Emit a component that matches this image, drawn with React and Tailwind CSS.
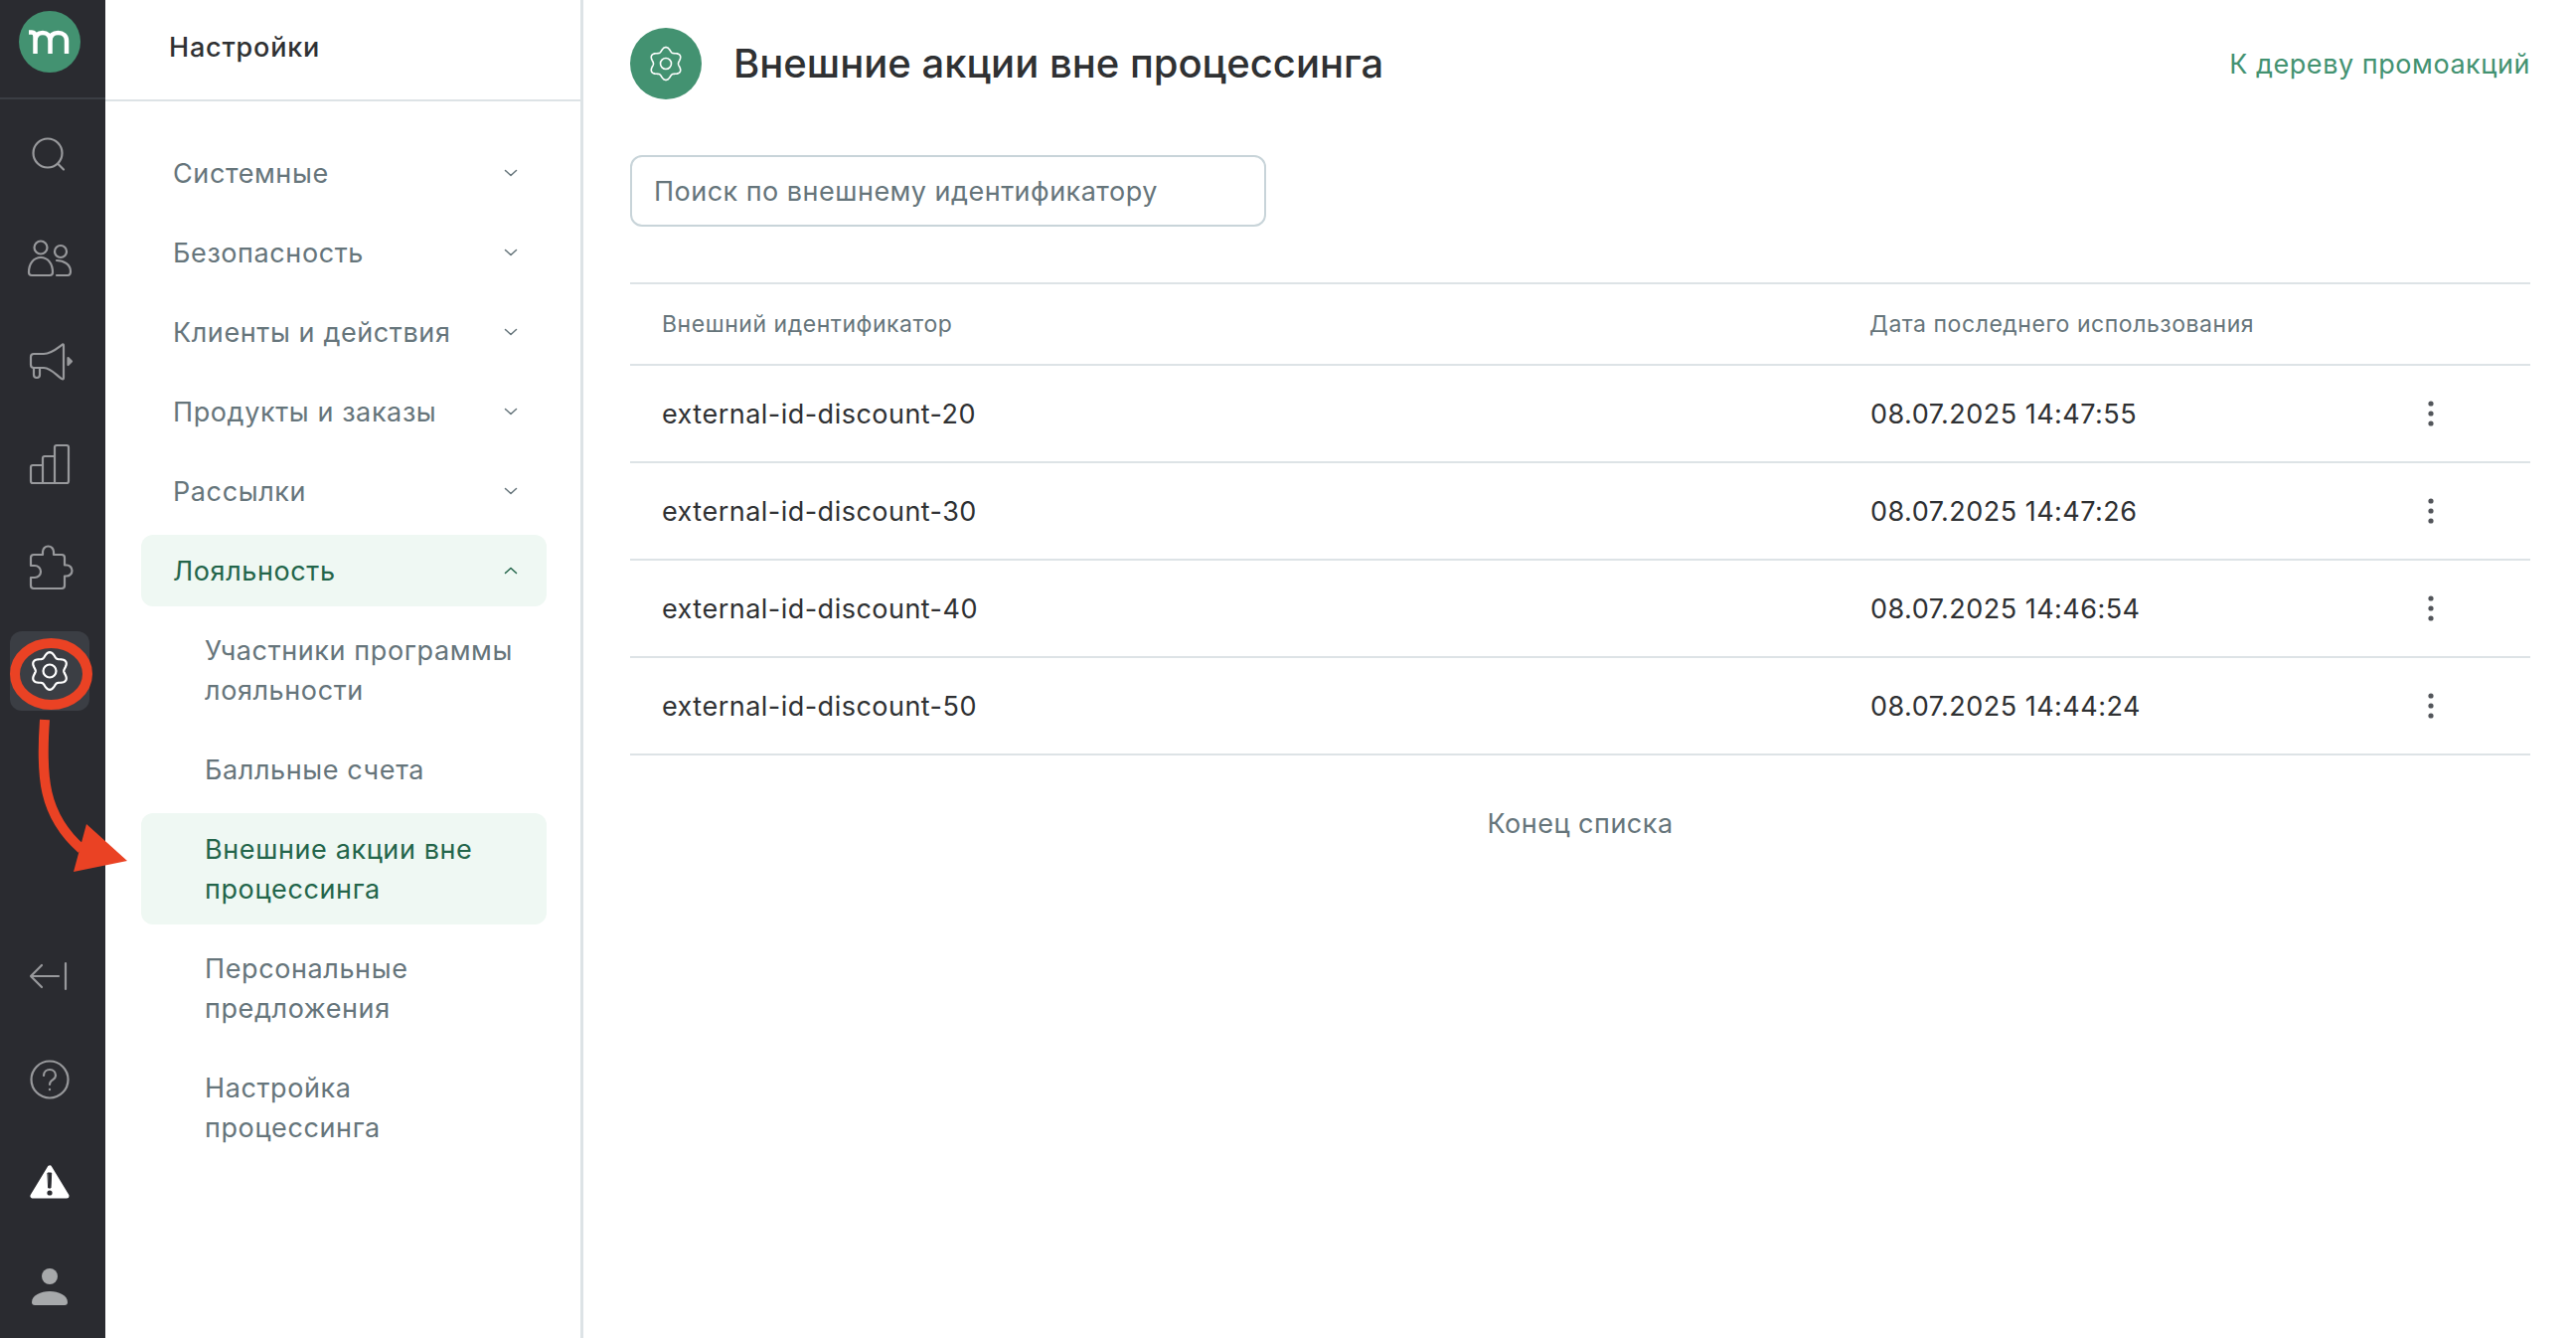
import React from 'react';

const FONT = 'font-[Inter,"Noto_Sans",sans-serif]';

// wavy six-lobed gear outline, same shape in the rail and in the page header
const gearPath = (cx, cy, r, wave) => {
    const pts = [];
    for (let i = 0; i < 120; i++) {
        const t = (i / 120) * Math.PI * 2;
        const rad = r + wave * Math.cos(6 * t);
        pts.push(`${(cx + rad * Math.sin(t)).toFixed(2)} ${(cy - rad * Math.cos(t)).toFixed(2)}`);
    }
    return `M${pts.join('L')}Z`;
};

const RailIcon = ({ children, active }) => (
    <div className="h-[104px] flex items-center justify-center">
        <div className={`w-[80px] h-[80px] rounded-xl flex items-center justify-center ${active ? 'bg-[#3b3e44]' : ''}`}>
            <svg width="52" height="52" viewBox="0 0 52 52" fill="none" stroke="#98999c" strokeWidth="2.2" strokeLinecap="round" strokeLinejoin="round">
                {children}
            </svg>
        </div>
    </div>
);

const Chevron = ({ up }) => (
    <svg width="16" height="16" viewBox="0 0 16 16" fill="none" stroke="currentColor" strokeWidth="1.5" strokeLinecap="round" strokeLinejoin="round">
        <path d={up ? 'M2.5 10.5 8 5.5l5.5 5' : 'M2.5 5.5 8 10.5l5.5-5'} />
    </svg>
);

const Rail = () => (
    <aside className="w-[106px] shrink-0 bg-[#2a2b30] flex flex-col">
        <div className="h-[100px] shrink-0 border-b-2 border-[#3b3e44] flex items-center justify-center pb-[14px] pr-[6px]">
            <svg width="62" height="62" viewBox="0 0 62 62" fill="none">
                <circle cx="31" cy="31" r="31" fill="#439271" />
                <path d="M10 21.5h3c2.5 0 3.5 1.5 3.5 4.5V43M16.5 30c0-6 3.5-8 7.5-8 4.5 0 7.5 3 7.5 8v13M31.5 30c0-6 3.5-8 8-8 5 0 8.5 3 8.5 8v13" stroke="#fff" strokeWidth="4.5" />
            </svg>
        </div>
        <div className="pt-[3px] pr-[6px]">
            <RailIcon>
                <circle cx="24" cy="25" r="14.5" />
                <path d="M34.5 36 40 41.5" />
            </RailIcon>
            <RailIcon>
                <circle cx="17" cy="16" r="6.5" />
                <path d="M8 44h18q3 0 3-3c0-9-5-15-12-15S5 32 5 41q0 3 3 3Z" />
                <circle cx="37" cy="20" r="6" />
                <path d="M33 29c7 0 14 4 14 11q0 4-3 4H33" />
            </RailIcon>
            <RailIcon>
                <path d="M10 19h10c8 0 14-6 19-9.5q1-.5 1 1.5v32q0 2-2 1c-5-3-10-10.5-18-11H10q-3 0-3-3v-8q0-3 3-3Z" />
                <path d="M10 33v7q0 3 3 3t3-3v-6" />
                <path d="M44.5 23 48 26.5 44.5 30Z" fill="#98999c" />
            </RailIcon>
            <RailIcon>
                <path d="M19 27H9q-2 0-2 2v14q0 2 2 2h34q2 0 2-2V9q0-2-2-2H33q-2 0-2 2v9H21q-2 0-2 2v25M31 18v27" />
            </RailIcon>
            <RailIcon>
                <path d="M10 13h9v-3a5.5 5.5 0 0 1 11 0v3h8q3 0 3 3v7.5h2a5.5 5.5 0 0 1 0 11h-2V44q0 3-3 3H10q-3 0-3-3v-8h4a6 6 0 0 0 0-12H7v-8q0-3 3-3Z" />
            </RailIcon>
            <RailIcon active>
                <path d={gearPath(26, 26, 16.5, 2.3)} stroke="#fff" />
                <circle cx="26" cy="26" r="6.5" stroke="#fff" />
            </RailIcon>
        </div>
        <div className="mt-auto pr-[6px]">
            <RailIcon>
                <path d="M7 26h28M18 15 7 26l11 11M42 13v26" />
            </RailIcon>
            <RailIcon>
                <circle cx="26" cy="26" r="18.5" />
                <path d="M20 22c0-4 3-6 6-6 4 0 6 3 6 6s-3 4-4.5 5.5c-1 1-1.5 2-1.5 3.5" />
                <circle cx="26" cy="36" r="1.2" fill="#98999c" stroke="none" />
            </RailIcon>
            <RailIcon>
                <path d="M26 11 9 39h34Z" fill="#fff" stroke="#fff" strokeWidth="5" />
                <path d="M24.3 16h3.4L27 31h-2Z" fill="#2a2b30" stroke="#2a2b30" strokeWidth="1" />
                <circle cx="26" cy="36" r="2.6" fill="#2a2b30" stroke="none" />
            </RailIcon>
            <RailIcon>
                <circle cx="26" cy="16" r="8" fill="#a7a9ab" stroke="none" />
                <path d="M8 42c0-7 9-11 18-11s18 4 18 11q0 3-3 3H11q-3 0-3-3Z" fill="#a7a9ab" stroke="none" />
            </RailIcon>
        </div>
    </aside>
);

const topItems = ['Системные', 'Безопасность', 'Клиенты и действия', 'Продукты и заказы', 'Рассылки'];
const subItems = [
    { label: 'Участники программы лояльности', h: 'h-[112px]' },
    { label: 'Балльные счета', h: 'h-[72px]' },
    { label: 'Внешние акции вне процессинга', h: 'h-[112px]', active: true },
    { label: 'Персональные предложения', h: 'h-[112px]' },
    { label: 'Настройка процессинга', h: 'h-[112px]' },
];

const SettingsNav = () => (
    <nav className="w-[481px] shrink-0 border-r-[3px] border-[#dde3e6] text-[27px] leading-[40px] tracking-[0.6px]">
        <div className="h-[102px] border-b-2 border-[#dde3e6] pl-[64px] pb-[4px] flex items-center text-[27px] tracking-[0.8px] font-medium text-[#2f3133]">
            Настройки
        </div>
        <div className="pt-[36px] pl-[36px] pr-[34px] flex flex-col gap-2">
            {topItems.map(label => (
                <div key={label} className="h-[72px] rounded-xl pl-[32px] pr-[28px] flex items-center justify-between text-[#66757b]">
                    <span className="pt-[1px]">{label}</span>
                    <Chevron />
                </div>
            ))}
            <div className="h-[72px] rounded-xl bg-[#eff8f3] pl-[32px] pr-[28px] flex items-center justify-between text-[#23654a]">
                <span className="pt-[1px]">Лояльность</span>
                <Chevron up />
            </div>
            {subItems.map(item => (
                <div
                    key={item.label}
                    className={`${item.h} rounded-xl pl-[64px] pr-[30px] flex items-center ${item.active ? 'bg-[#eff8f3] text-[#23654a]' : 'text-[#66757b]'}`}
                >
                    <span className="pt-[1px]">{item.label}</span>
                </div>
            ))}
        </div>
    </nav>
);

const rows = [
    ['external-id-discount-20', '08.07.2025 14:47:55'],
    ['external-id-discount-30', '08.07.2025 14:47:26'],
    ['external-id-discount-40', '08.07.2025 14:46:54'],
    ['external-id-discount-50', '08.07.2025 14:44:24'],
];

const Dots = () => (
    <svg width="6" height="26" viewBox="0 0 6 26" fill="#53565b">
        <circle cx="3" cy="3" r="2.6" />
        <circle cx="3" cy="13" r="2.6" />
        <circle cx="3" cy="23" r="2.6" />
    </svg>
);

const Main = () => (
    <main className="flex-1 min-w-0 pl-[47px] pr-[46px] pt-[28px]">
        <header className="flex items-center justify-between h-[72px]">
            <div className="flex items-center gap-[32px]">
                <div className="w-[72px] h-[72px] rounded-full bg-[#439271] flex items-center justify-center">
                    <svg width="36" height="36" viewBox="0 0 36 36" fill="none" stroke="#fff" strokeWidth="1.6" strokeLinejoin="round">
                        <path d={gearPath(18, 18, 14.5, 2)} />
                        <circle cx="18" cy="18" r="5.5" />
                    </svg>
                </div>
                <h1 className="text-[40px] leading-[56px] font-medium text-[#2f3133]">Внешние акции вне процессинга</h1>
            </div>
            <a className="text-[27px] leading-[40px] pt-[1px] tracking-[0.55px] text-[#439271]">К дереву промоакций</a>
        </header>

        <div className="mt-[56px] w-[640px] h-[72px] rounded-xl border-2 border-[#c8d4d9] px-[22px] pt-[2px] flex items-center text-[27px] tracking-[0.48px] text-[#66757b]">
            Поиск по внешнему идентификатору
        </div>

        <div className="mt-[56px] border-t-2 border-[#dde3e6]">
            <div className="h-[82px] border-b-2 border-[#dde3e6] pl-[32px] flex items-center text-[23px] tracking-[0.54px] text-[#66757b]">
                <div className="w-[1215px]">Внешний идентификатор</div>
                <div>Дата последнего использования</div>
            </div>
            {rows.map(([id, date]) => (
                <div key={id} className="h-[98px] border-b-2 border-[#dde3e6] pl-[32px] flex items-center text-[27px] tracking-[0.48px] text-[#2f3133]">
                    <div className="w-[1216px] pt-[2px]">{id}</div>
                    <div className="w-[561px] pt-[2px]">{date}</div>
                    <Dots />
                </div>
            ))}
            <div className="pt-[49px] text-center text-[27px] leading-[40px] tracking-[0.5px] text-[#66757b]">Конец списка</div>
        </div>
    </main>
);

export default function App() {
    return (
        <div className={`relative flex h-screen w-full overflow-hidden bg-white ${FONT}`}>
            <Rail />
            <SettingsNav />
            <Main />
            {/* red hand-drawn annotation on top of the screenshot */}
            <svg className="absolute left-0 top-[630px]" width="140" height="260" viewBox="0 0 140 260" fill="none">
                <ellipse cx="51.5" cy="48" rx="36.5" ry="31" stroke="#ea4224" strokeWidth="10" />
                <path d="M45 94C41 150 43 190 82 224" stroke="#ea4224" strokeWidth="10" />
                <path d="M87 199l41 37-54 11Z" fill="#ea4224" />
            </svg>
        </div>
    );
}
